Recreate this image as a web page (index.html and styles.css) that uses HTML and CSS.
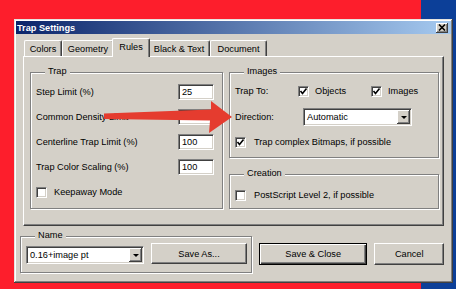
FILE: index.html
```html
<!DOCTYPE html>
<html lang="en">
<head>
    <meta charset="UTF-8">
    <title>Trap Settings</title>
    <link rel="stylesheet" href="styles.css">
</head>
<body>
    <div class="dialog">
        <div class="titlebar">
            <span>Trap Settings</span>
            <span class="close">
                <svg width="8" height="7" viewBox="0 0 8 7"><path d="M1 0.5 L7 6.5 M7 0.5 L1 6.5" stroke="#000" stroke-width="1.6"/></svg>
            </span>
        </div>
        <div class="dialog-body">
            <div class="tabs">
                <div class="tab tab-colors">Colors</div>
                <div class="tab tab-geometry">Geometry</div>
                <div class="tab tab-rules tab-active">Rules</div>
                <div class="tab tab-black">Black &amp; Text</div>
                <div class="tab tab-document">Document</div>
            </div>
            <div class="panel">
                <div class="group group-trap">
                    <div class="group-title">Trap</div>
                    <div class="row"><span>Step Limit (%)</span><span class="field">25</span></div>
                    <div class="row"><span>Common Density Limit</span><span class="field"></span></div>
                    <div class="row"><span>Centerline Trap Limit (%)</span><span class="field">100</span></div>
                    <div class="row"><span>Trap Color Scaling (%)</span><span class="field">100</span></div>
                    <div class="row row-check"><span class="check"></span>Keepaway Mode</div>
                </div>
                <div class="col-right">
                    <div class="group group-images">
                        <div class="group-title">Images</div>
                        <div class="row">
                            <span class="lbl-trapto">Trap To:</span>
                            <span class="opt opt-objects"><span class="check checked"><svg width="9" height="9" viewBox="0 0 9 9"><path d="M1.5 4 L3.5 6.5 L7.5 1.5" fill="none" stroke="#000" stroke-width="1.6"/></svg></span>Objects</span>
                            <span class="opt"><span class="check checked"><svg width="9" height="9" viewBox="0 0 9 9"><path d="M1.5 4 L3.5 6.5 L7.5 1.5" fill="none" stroke="#000" stroke-width="1.6"/></svg></span>Images</span>
                        </div>
                        <div class="row row-direction">
                            <span class="lbl-direction">Direction:</span>
                            <span class="select"><span class="select-text">Automatic</span><span class="drop"></span></span>
                        </div>
                        <div class="row row-bitmaps">
                            <span class="check checked"><svg width="9" height="9" viewBox="0 0 9 9"><path d="M1.5 4 L3.5 6.5 L7.5 1.5" fill="none" stroke="#000" stroke-width="1.6"/></svg></span>Trap complex Bitmaps, if possible
                        </div>
                    </div>
                    <div class="group group-creation">
                        <div class="group-title">Creation</div>
                        <div class="row row-postscript"><span class="check"></span>PostScript Level 2, if possible</div>
                    </div>
                </div>
            </div>
            <div class="footer">
                <div class="group group-name">
                    <div class="group-title">Name</div>
                    <div class="name-row">
                        <span class="select combo"><span class="select-text">0.16+image pt</span><span class="drop"></span></span>
                        <button class="btn btn-saveas">Save As...</button>
                    </div>
                </div>
                <button class="btn btn-default">Save &amp; Close</button>
                <button class="btn btn-cancel">Cancel</button>
            </div>
        </div>
        <svg class="arrow" viewBox="14 19 439 264">
            <path d="M104 113.5 L211 109.5 L211 101 L232 117 L209 133 L210 120.5 L104 119 Z" fill="#e53c2f"/>
        </svg>
    </div>
</body>
</html>
```

FILE: styles.css
```css
*{
    box-sizing: border-box;
}
body{
    margin: 0;
    padding: 19px 0 0 14px;
    width: 456px;
    height: 289px;
    overflow: hidden;
    background: linear-gradient(to right, #fd1e2c 421px, #0c3f98 421px);
    font-family: "Liberation Sans", Arial, sans-serif;
    font-size: 9.2px;
    color: #000;
}
.dialog{
    position: relative;
    width: 439px;
    height: 264px;
    padding: 2px;
    background: #d4d0c8;
    box-shadow: inset -1px -1px #404040, inset 1px 1px #e6e4df, inset -2px -2px #808080, inset 2px 2px #fff;
}
.titlebar{
    height: 13px;
    display: flex;
    align-items: center;
    justify-content: space-between;
    padding: 0 3px 0 1px;
    background: linear-gradient(to right, #0a246a, #a6caf0);
    color: #fff;
    font-weight: bold;
}
.close{
    width: 12px;
    height: 10px;
    display: flex;
    align-items: center;
    justify-content: center;
    background: #d4d0c8;
    box-shadow: inset -1px -1px #404040, inset 1px 1px #fff, inset -2px -2px #808080;
}
.dialog-body{
    padding: 4px 7px 0;
}

/* tabs */
.tabs{
    position: relative;
    z-index: 1;
    display: flex;
    align-items: flex-end;
    height: 18px;
    padding-left: 1px;
}
.tab{
    height: 16px;
    display: flex;
    align-items: center;
    justify-content: center;
    border-top: 1px solid #fff;
    border-left: 1px solid #fff;
    border-right: 1px solid #404040;
    border-radius: 2px 2px 0 0;
    box-shadow: inset -1px 0 #808080;
}
.tab-colors{ width: 38px; }
.tab-geometry{ width: 52px; }
.tab-rules{ width: 38px; }
.tab-black{ width: 62px; }
.tab-document{ width: 57px; }
.tab-active{
    position: relative;
    height: 19px;
    margin: 0 -2px -1px;
    padding-bottom: 2px;
    background: #d4d0c8;
}

/* panel */
.panel{
    height: 170px;
    display: flex;
    gap: 6px;
    padding: 15px 0 0 6px;
    border: 1px solid;
    border-color: #fff #404040 #404040 #fff;
    box-shadow: inset -1px -1px #808080;
}
.group{
    border: 1px solid #808080;
    box-shadow: 1px 1px 0 #fff, inset 1px 1px 0 #fff;
    padding: 0 8px 0 5px;
}
.group-title{
    width: fit-content;
    height: 11px;
    line-height: 11px;
    margin: -7px 0 0 9px;
    padding: 0 3px;
    background: #d4d0c8;
}
.row{
    display: flex;
    align-items: center;
    height: 16px;
    white-space: nowrap;
}
.group-trap{
    width: 193px;
    height: 137px;
}
.group-trap .row{
    justify-content: space-between;
    margin-top: 9px;
}
.group-trap .group-title + .row{
    margin-top: 7px;
}
.group-trap .row-check{
    justify-content: flex-start;
}
.field{
    width: 36px;
    height: 16px;
    padding: 0 3px;
    line-height: 14px;
    background: #fff;
    border: 1px solid;
    border-color: #808080 #fff #fff #808080;
    box-shadow: inset 1px 1px #404040, inset -1px -1px #d4d0c8;
}
.check{
    width: 11px;
    height: 11px;
    flex: none;
    margin-right: 7px;
    display: flex;
    align-items: center;
    justify-content: center;
    background: #fff;
    border: 1px solid;
    border-color: #808080 #fff #fff #808080;
    box-shadow: inset 1px 1px #404040, inset -1px -1px #d4d0c8;
}

/* right column */
.col-right{
    width: 210px;
    display: flex;
    flex-direction: column;
}
.group-images{
    height: 86px;
}
.group-images .group-title + .row{
    margin-top: 6px;
}
.lbl-trapto{
    width: 63px;
}
.opt{
    display: flex;
    align-items: center;
}
.opt .check{
    margin-right: 6px;
}
.opt-objects{
    width: 73px;
}
.row-direction{
    height: 18px;
    margin-top: 9px;
}
.lbl-direction{
    width: 68px;
}
.select{
    width: 109px;
    height: 18px;
    display: flex;
    align-items: center;
    justify-content: space-between;
    padding: 1px;
    background: #fff;
    border: 1px solid;
    border-color: #808080 #fff #fff #808080;
    box-shadow: inset 1px 1px #404040, inset -1px -1px #d4d0c8;
}
.select-text{
    padding-left: 2px;
}
.drop{
    width: 13px;
    height: 14px;
    display: flex;
    align-items: center;
    justify-content: center;
    background: #d4d0c8;
    box-shadow: inset -1px -1px #404040, inset 1px 1px #fff, inset -2px -2px #808080;
}
.drop::after{
    content: "";
    border-left: 3px solid transparent;
    border-right: 3px solid transparent;
    border-top: 3px solid #000;
}
.row-bitmaps{
    margin-top: 8px;
}
.row-bitmaps .check,
.row-postscript .check{
    margin-right: 8px;
}
.group-creation{
    height: 35px;
    margin-top: 16px;
}
.row-postscript{
    margin-top: 8px;
}

/* footer */
.footer{
    display: flex;
    align-items: flex-start;
    margin-top: 10px;
}
.group-name{
    width: 232px;
    height: 37px;
    margin-left: -3px;
    padding: 0 4px 0 5px;
}
.name-row{
    display: flex;
    align-items: flex-end;
    gap: 7px;
    margin-top: 2px;
}
.combo{
    width: 118px;
    height: 18px;
}
.combo .drop{
    height: 14px;
}
.btn{
    height: 22px;
    padding: 0;
    font: inherit;
    color: #000;
    background: #d4d0c8;
    border: 1px solid;
    border-color: #fff #404040 #404040 #fff;
    box-shadow: inset -1px -1px #808080;
}
.btn-saveas{
    width: 96px;
    height: 21px;
}
.btn-default{
    width: 109px;
    margin: 7px 0 0 7px;
    border-color: #000;
    box-shadow: inset 1px 1px #fff, inset -1px -1px #404040, inset -2px -2px #808080;
}
.btn-cancel{
    width: 70px;
    margin: 7px 0 0 7px;
}

/* red pointer drawn over the dialog */
.arrow{
    position: absolute;
    left: 0;
    top: 0;
    width: 439px;
    height: 264px;
    pointer-events: none;
}
```
